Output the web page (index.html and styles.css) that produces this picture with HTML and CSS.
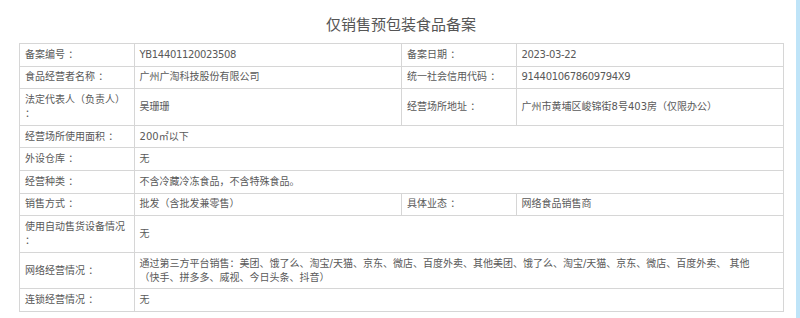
FILE: index.html
```html
<!DOCTYPE html>
<html lang="zh-CN">
<head>
<meta charset="utf-8">
<title>仅销售预包装食品备案</title>
<link rel="stylesheet" href="styles.css">
</head>
<body>
<div class="page">
  <main class="main">
    <h1 class="title">仅销售预包装食品备案</h1>
    <table class="record">
      <colgroup>
        <col class="c-label"><col class="c-value"><col class="c-label"><col class="c-value">
      </colgroup>
      <tr>
        <td>备案编号 ：</td>
        <td><span class="num">YB14401120023508</span></td>
        <td>备案日期 ：</td>
        <td><span class="num">2023-03-22</span></td>
      </tr>
      <tr>
        <td>食品经营者名称 ：</td>
        <td>广州广淘科技股份有限公司</td>
        <td>统一社会信用代码 ：</td>
        <td><span class="num">9144010678609794X9</span></td>
      </tr>
      <tr>
        <td>法定代表人（负责人） ：</td>
        <td>吴珊珊</td>
        <td>经营场所地址 ：</td>
        <td>广州市黄埔区峻锦街8号403房（仅限办公）</td>
      </tr>
      <tr>
        <td>经营场所使用面积 ：</td>
        <td colspan="3">200㎡以下</td>
      </tr>
      <tr>
        <td>外设仓库 ：</td>
        <td colspan="3">无</td>
      </tr>
      <tr>
        <td>经营种类 ：</td>
        <td colspan="3">不含冷藏冷冻食品，不含特殊食品。</td>
      </tr>
      <tr>
        <td>销售方式 ：</td>
        <td>批发（含批发兼零售）</td>
        <td>具体业态 ：</td>
        <td>网络食品销售商</td>
      </tr>
      <tr>
        <td>使用自动售货设备情况 ：</td>
        <td colspan="3">无</td>
      </tr>
      <tr>
        <td>网络经营情况 ：</td>
        <td colspan="3">通过第三方平台销售：美团、饿了么、淘宝/天猫、京东、微店、百度外卖、其他美团、饿了么、淘宝/天猫、京东、微店、百度外卖、 其他<br>（快手、拼多多、威视、今日头条、抖音）</td>
      </tr>
      <tr>
        <td>连锁经营情况 ：</td>
        <td colspan="3">无</td>
      </tr>
    </table>
  </main>
  <div class="edge"></div>
</div>
</body>
</html>
```

FILE: styles.css
```css
html, body {
  margin: 0;
  padding: 0;
  background: #ffffff;
}

body {
  font-family: "DejaVu Sans", "Noto Sans CJK SC", sans-serif;
  color: #595959;
}

.page {
  display: flex;
  width: 800px;
  height: 318px;
}

.main {
  width: 796px;
  padding-top: 14px;
  box-sizing: border-box;
}

.title {
  margin: 0 0 9px 0;
  text-align: center;
  font-family: "Noto Sans CJK SC", sans-serif;
  font-size: 15px;
  line-height: 20px;
  font-weight: normal;
  color: #555555;
  padding-left: 6px;
}

.record {
  margin-left: 19px;
  width: 765px;
  border-collapse: collapse;
  table-layout: fixed;
  font-size: 10px;
  line-height: 14px;
}

.c-label { width: 15%; }
.c-value { width: 35%; }

.record td {
  border: 1px solid #d6d6d6;
  padding: 3.8px 5px;
  vertical-align: middle;
  color: #595959;
}

.num {
  letter-spacing: -0.35px;
}

.edge {
  width: 4px;
  background: #bfe4f8;
}
```
